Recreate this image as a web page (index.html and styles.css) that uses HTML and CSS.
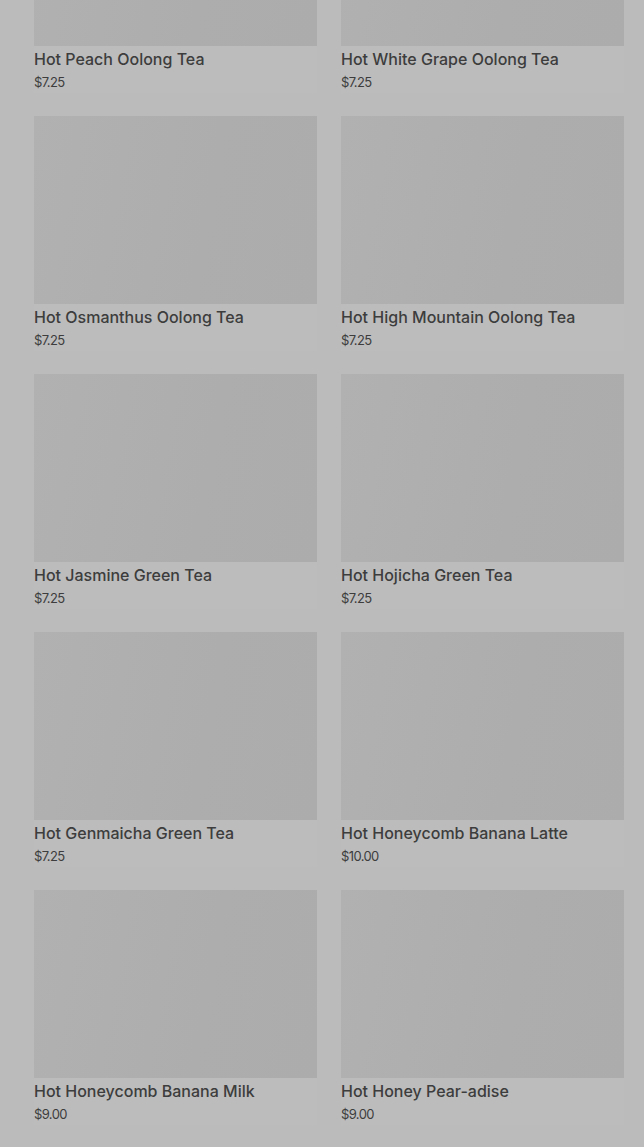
FILE: index.html
```html
<!DOCTYPE html>
<html lang="en">
<head>
    <meta charset="UTF-8">
    <meta name="viewport" content="width=device-width, initial-scale=1.0">
    <title>Hot Tea Menu</title>
    <link rel="stylesheet" href="styles.css">
</head>
<body>

    <div class="grid">
        <div class="card">
            <div class="thumb"></div>
            <h3 class="name">Hot Peach Oolong Tea</h3>
            <p class="price">$7.25</p>
        </div>
        <div class="card">
            <div class="thumb"></div>
            <h3 class="name">Hot White Grape Oolong Tea</h3>
            <p class="price">$7.25</p>
        </div>
        <div class="card">
            <div class="thumb"></div>
            <h3 class="name">Hot Osmanthus Oolong Tea</h3>
            <p class="price">$7.25</p>
        </div>
        <div class="card">
            <div class="thumb"></div>
            <h3 class="name">Hot High Mountain Oolong Tea</h3>
            <p class="price">$7.25</p>
        </div>
        <div class="card">
            <div class="thumb"></div>
            <h3 class="name">Hot Jasmine Green Tea</h3>
            <p class="price">$7.25</p>
        </div>
        <div class="card">
            <div class="thumb"></div>
            <h3 class="name">Hot Hojicha Green Tea</h3>
            <p class="price">$7.25</p>
        </div>
        <div class="card">
            <div class="thumb"></div>
            <h3 class="name">Hot Genmaicha Green Tea</h3>
            <p class="price">$7.25</p>
        </div>
        <div class="card">
            <div class="thumb"></div>
            <h3 class="name">Hot Honeycomb Banana Latte</h3>
            <p class="price">$10.00</p>
        </div>
        <div class="card">
            <div class="thumb"></div>
            <h3 class="name">Hot Honeycomb Banana Milk</h3>
            <p class="price">$9.00</p>
        </div>
        <div class="card">
            <div class="thumb"></div>
            <h3 class="name">Hot Honey Pear-adise</h3>
            <p class="price">$9.00</p>
        </div>
    </div>

</body>
</html>
```

FILE: styles.css
```css
body {
    font-family: Inter, Roboto, 'Liberation Sans', Arial, sans-serif;
    background-color: #bbbbbb;
    color: #3d3d3d;
    margin: 0;
    padding: 0;
    height: 1147px;
    overflow: hidden;
}

.grid {
    display: grid;
    grid-template-columns: 283px 283px;
    column-gap: 24px;
    row-gap: 23px;
    margin-top: -142px;
    padding-left: 34px;
    padding-right: 20px;
}

.card {
    background-color: #bcbcbc;
}

.thumb {
    height: 188px;
    background: linear-gradient(100deg, #b1b1b1 0%, #adadad 60%, #acacac 100%);
}

.name {
    margin: 1px 0 0;
    font-size: 16px;
    font-weight: 500;
    line-height: 24px;
}

.price {
    margin: 0;
    font-size: 13px;
    line-height: 22px;
    letter-spacing: -0.6px;
}
```
